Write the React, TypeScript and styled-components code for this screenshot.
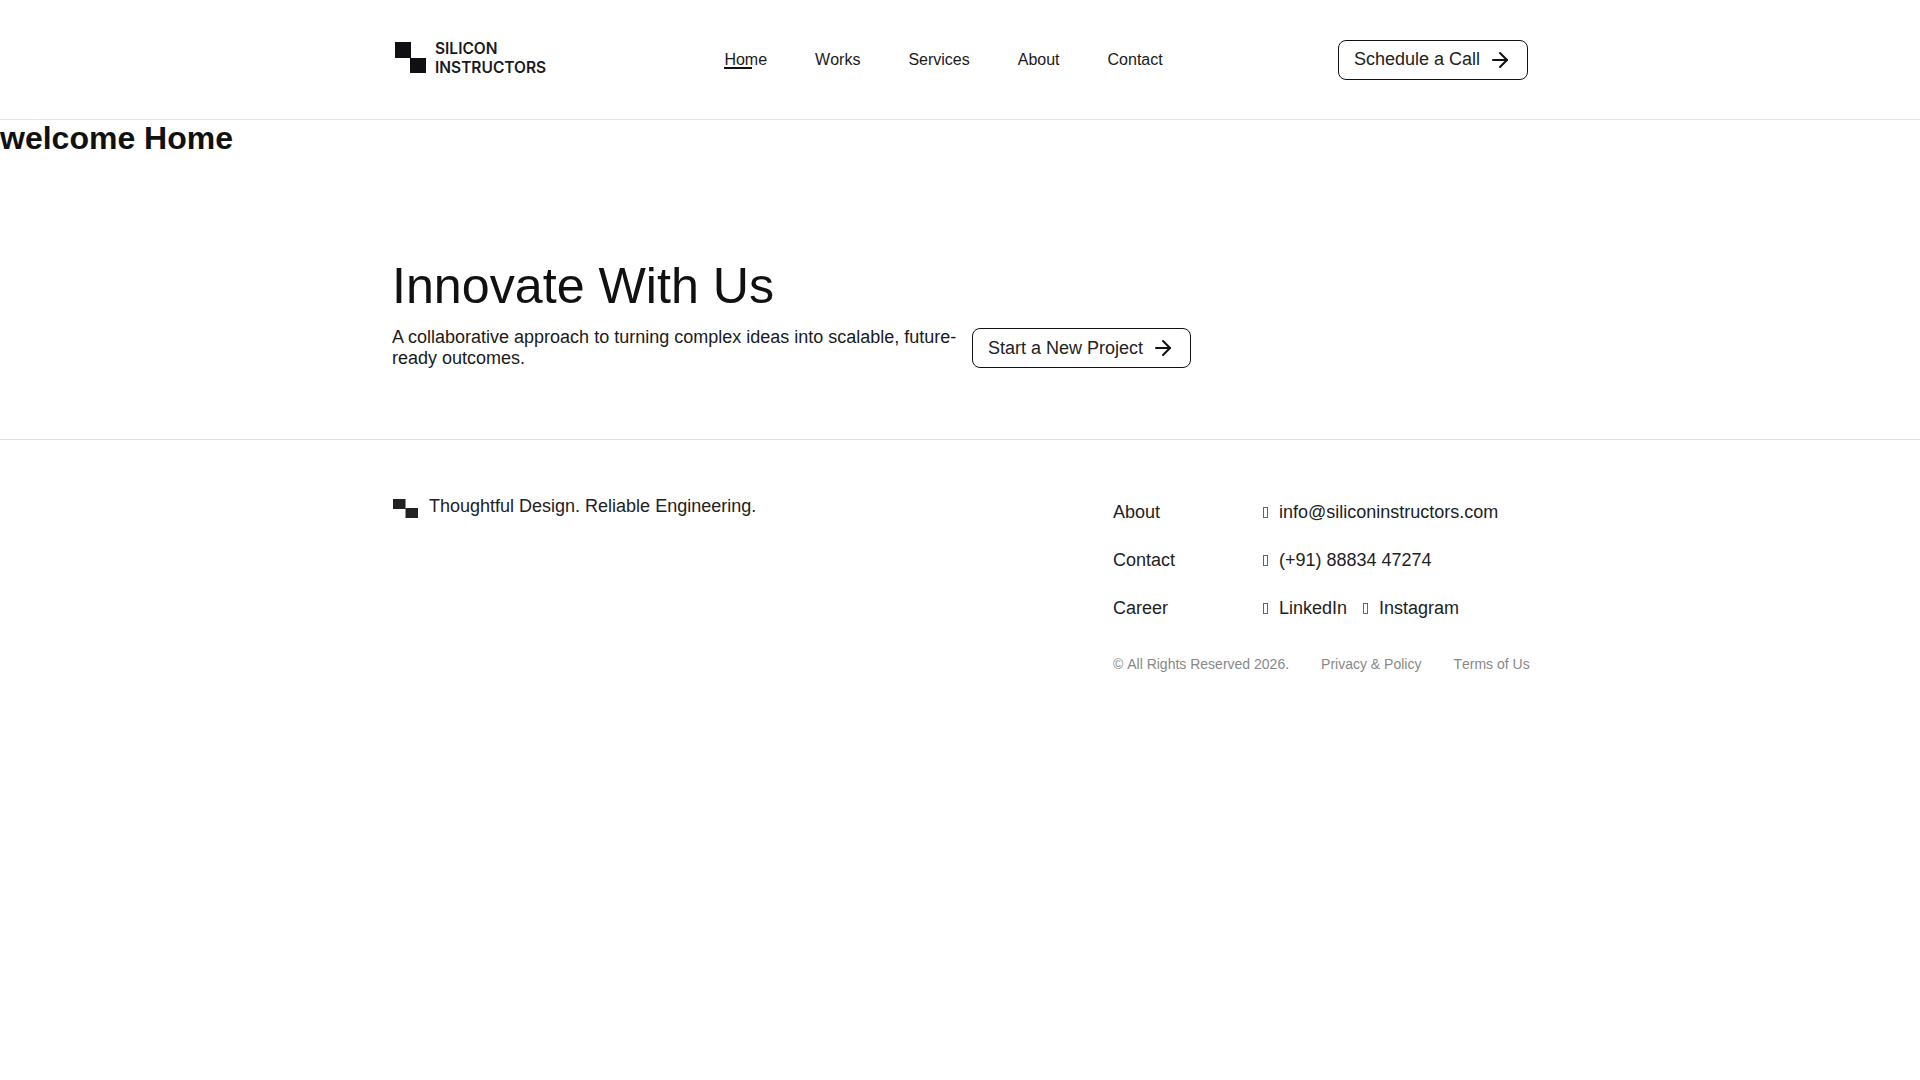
import React from 'react';
import styled, { createGlobalStyle } from 'styled-components';
import { ArrowRight } from 'lucide-react';

const GlobalStyle = createGlobalStyle`
  * {
    box-sizing: border-box;
  }

  body {
    margin: 0;
    background: #fff;
    color: #111;
    font-family: "Liberation Sans", Arial, sans-serif;
    font-kerning: none;
  }
`;

const Header = styled.header`
  height: 120px;
  border-bottom: 1px solid #e5e5e5;
  display: flex;
  justify-content: center;
`;

const HeaderInner = styled.div`
  width: 1136px;
  display: flex;
  align-items: center;
  justify-content: space-between;
`;

const Logo = styled.a`
  display: flex;
  align-items: center;
  gap: 9px;
  margin: 0 0 4px 3px;
`;

const LogoText = styled.span`
  font-family: Inter, "Liberation Sans", sans-serif;
  font-size: 15.5px;
  font-weight: 600;
  font-kerning: normal;
  line-height: 19px;
  color: #1a1a1e;
`;

const Nav = styled.nav`
  display: flex;
  gap: 48px;
  margin-left: 3px;
`;

const NavLink = styled.a<{ $active?: boolean }>`
  position: relative;
  font-size: 16px;
  line-height: 20px;
  color: #1a1a1a;

  ${(props) =>
    props.$active &&
    `
    &::after {
      content: '';
      position: absolute;
      left: 0;
      bottom: 1px;
      width: 28px;
      height: 2px;
      background: #111;
    }
  `}
`;

const OutlineButton = styled.button`
  display: inline-flex;
  align-items: center;
  gap: 8px;
  height: 40px;
  padding: 0 15px;
  border: 1px solid #111;
  border-radius: 8px;
  background: #fff;
  color: #222;
  font-family: inherit;
  font-size: 18px;
  font-kerning: none;
  white-space: nowrap;
`;

const WelcomeTitle = styled.h1`
  margin: 0;
  font-size: 32px;
  line-height: 37px;
  font-weight: 700;
`;

const HeroSection = styled.section`
  display: flex;
  justify-content: center;
  padding: 99px 0 70px;
  border-bottom: 1px solid #e0e0e0;
`;

const HeroInner = styled.div`
  width: 1136px;
`;

const HeroTitle = styled.h2`
  margin: 0 0 11px;
  font-size: 50.2px;
  line-height: 60px;
  font-weight: 400;
  color: #111;
`;

const HeroRow = styled.div`
  display: flex;
  align-items: center;
  gap: 12px;
`;

const HeroText = styled.p`
  width: 568px;
  margin: 0;
  font-size: 18px;
  font-kerning: normal;
  line-height: 21px;
  color: #1a1a1a;
`;

const Footer = styled.footer`
  display: flex;
  justify-content: center;
  padding-top: 54px;
`;

const FooterInner = styled.div`
  width: 1136px;
  display: flex;
  justify-content: space-between;
`;

const Tagline = styled.div`
  display: flex;
  align-items: flex-start;
  gap: 11px;
  margin-left: 1px;
  font-size: 18px;
  line-height: 24px;
  color: #222;
`;

const TaglineMark = styled.svg`
  margin-top: 5px;
`;

const FooterRight = styled.div`
  width: 417px;
  margin-right: -2px;
  padding-top: 8px;
`;

const LinkGrid = styled.div`
  display: grid;
  grid-template-columns: 150px 1fr;
  row-gap: 27px;
`;

const FooterItem = styled.a`
  font-size: 18px;
  line-height: 21px;
  color: #222;
`;

const ContactRow = styled.div`
  display: flex;
  gap: 16px;
`;

const ContactItem = styled.span`
  display: flex;
  align-items: center;
  gap: 11px;
  font-size: 18px;
  line-height: 21px;
  color: #222;
`;

// stands in for the icon font glyph that never loaded
const MissingGlyph = styled.i`
  width: 5px;
  height: 11px;
  margin-top: -1px;
  border: 1px solid #666;
`;

const LegalRow = styled.div`
  display: flex;
  gap: 32px;
  margin-top: 37px;
  font-size: 14px;
  line-height: 16px;
  color: #888;
  white-space: nowrap;
`;

const App: React.FC = () => {
  return (
    <>
      <GlobalStyle />
      <Header>
        <HeaderInner>
          <Logo>
            <svg width="31" height="31" viewBox="0 0 31 31">
              <rect x="0" y="0" width="16" height="16" fill="#101014" />
              <rect x="15" y="16" width="16" height="15" fill="#101014" />
            </svg>
            <LogoText>
              SILICON
              <br />
              INSTRUCTORS
            </LogoText>
          </Logo>
          <Nav>
            <NavLink $active>Home</NavLink>
            <NavLink>Works</NavLink>
            <NavLink>Services</NavLink>
            <NavLink>About</NavLink>
            <NavLink>Contact</NavLink>
          </Nav>
          <OutlineButton>
            Schedule a Call <ArrowRight size={24} color="#111" />
          </OutlineButton>
        </HeaderInner>
      </Header>

      <WelcomeTitle>welcome Home</WelcomeTitle>

      <HeroSection>
        <HeroInner>
          <HeroTitle>Innovate With Us</HeroTitle>
          <HeroRow>
            <HeroText>
              A collaborative approach to turning complex ideas into scalable, future-ready outcomes.
            </HeroText>
            <OutlineButton>
              Start a New Project <ArrowRight size={24} color="#111" />
            </OutlineButton>
          </HeroRow>
        </HeroInner>
      </HeroSection>

      <Footer>
        <FooterInner>
          <Tagline>
            <TaglineMark width="25" height="19" viewBox="0 0 25 19">
              <rect x="0" y="0" width="12.5" height="10" fill="#222" />
              <rect x="12.5" y="9" width="12.5" height="10" fill="#222" />
            </TaglineMark>
            Thoughtful Design. Reliable Engineering.
          </Tagline>
          <FooterRight>
            <LinkGrid>
              <FooterItem>About</FooterItem>
              <ContactItem>
                <MissingGlyph />
                info@siliconinstructors.com
              </ContactItem>
              <FooterItem>Contact</FooterItem>
              <ContactItem>
                <MissingGlyph />
                (+91) 88834 47274
              </ContactItem>
              <FooterItem>Career</FooterItem>
              <ContactRow>
                <ContactItem>
                  <MissingGlyph />
                  LinkedIn
                </ContactItem>
                <ContactItem>
                  <MissingGlyph />
                  Instagram
                </ContactItem>
              </ContactRow>
            </LinkGrid>
            <LegalRow>
              <span>© All Rights Reserved 2026.</span>
              <span>Privacy &amp; Policy</span>
              <span>Terms of Us</span>
            </LegalRow>
          </FooterRight>
        </FooterInner>
      </Footer>
    </>
  );
};

export default App;
